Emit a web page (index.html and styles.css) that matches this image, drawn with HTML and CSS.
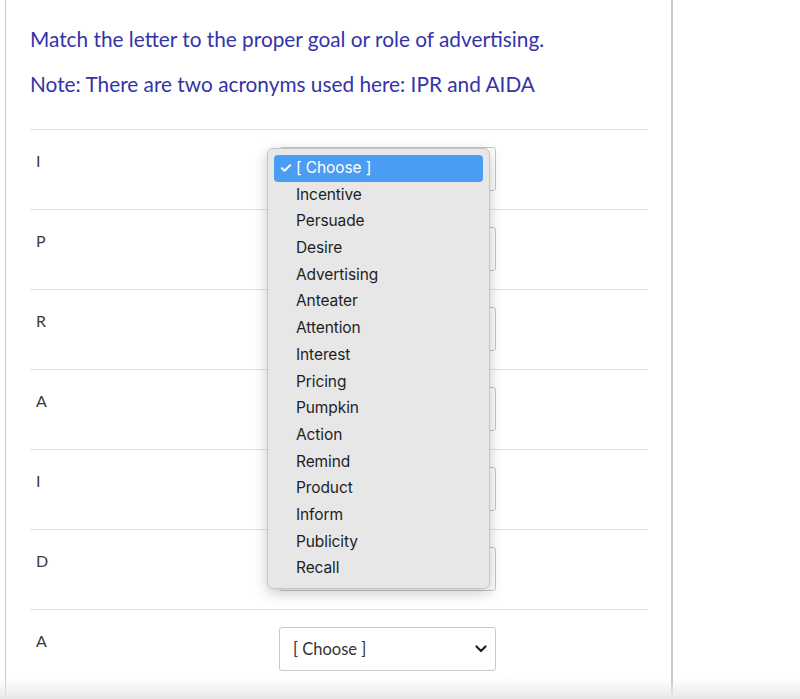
FILE: index.html
```html
<!DOCTYPE html>
<html>
<head>
<meta charset="utf-8">
<link rel="stylesheet" href="styles.css">
</head>
<body>
<div class="page">
  <div class="question">
    <p class="q-text">Match the letter to the proper goal or role of advertising.</p>
    <p class="q-text note">Note: There are two acronyms used here: IPR and AIDA</p>
  </div>
  <div class="rows">
    <div class="row"><div class="letter">I</div><div class="select"><span>[ Choose ]</span><svg class="chev" viewBox="0 0 12 8" width="12" height="8"><path d="M1.5 1.5 L6 6 L10.5 1.5" fill="none" stroke="#222" stroke-width="2.2" stroke-linecap="round" stroke-linejoin="round"/></svg></div></div>
    <div class="row"><div class="letter">P</div><div class="select"><span>[ Choose ]</span><svg class="chev" viewBox="0 0 12 8" width="12" height="8"><path d="M1.5 1.5 L6 6 L10.5 1.5" fill="none" stroke="#222" stroke-width="2.2" stroke-linecap="round" stroke-linejoin="round"/></svg></div></div>
    <div class="row"><div class="letter">R</div><div class="select"><span>[ Choose ]</span><svg class="chev" viewBox="0 0 12 8" width="12" height="8"><path d="M1.5 1.5 L6 6 L10.5 1.5" fill="none" stroke="#222" stroke-width="2.2" stroke-linecap="round" stroke-linejoin="round"/></svg></div></div>
    <div class="row"><div class="letter">A</div><div class="select"><span>[ Choose ]</span><svg class="chev" viewBox="0 0 12 8" width="12" height="8"><path d="M1.5 1.5 L6 6 L10.5 1.5" fill="none" stroke="#222" stroke-width="2.2" stroke-linecap="round" stroke-linejoin="round"/></svg></div></div>
    <div class="row"><div class="letter">I</div><div class="select"><span>[ Choose ]</span><svg class="chev" viewBox="0 0 12 8" width="12" height="8"><path d="M1.5 1.5 L6 6 L10.5 1.5" fill="none" stroke="#222" stroke-width="2.2" stroke-linecap="round" stroke-linejoin="round"/></svg></div></div>
    <div class="row"><div class="letter">D</div><div class="select"><span>[ Choose ]</span><svg class="chev" viewBox="0 0 12 8" width="12" height="8"><path d="M1.5 1.5 L6 6 L10.5 1.5" fill="none" stroke="#222" stroke-width="2.2" stroke-linecap="round" stroke-linejoin="round"/></svg></div></div>
    <div class="row"><div class="letter">A</div><div class="select"><span>[ Choose ]</span><svg class="chev" viewBox="0 0 12 8" width="12" height="8"><path d="M1.5 1.5 L6 6 L10.5 1.5" fill="none" stroke="#222" stroke-width="2.2" stroke-linecap="round" stroke-linejoin="round"/></svg></div></div>
  </div>
</div>

<ul class="menu">
  <li class="item selected"><span class="check">✓</span>[ Choose ]</li>
  <li class="item">Incentive</li>
  <li class="item">Persuade</li>
  <li class="item">Desire</li>
  <li class="item">Advertising</li>
  <li class="item">Anteater</li>
  <li class="item">Attention</li>
  <li class="item">Interest</li>
  <li class="item">Pricing</li>
  <li class="item">Pumpkin</li>
  <li class="item">Action</li>
  <li class="item">Remind</li>
  <li class="item">Product</li>
  <li class="item">Inform</li>
  <li class="item">Publicity</li>
  <li class="item">Recall</li>
</ul>

<div class="fade"></div>
</body>
</html>
```

FILE: styles.css
```css
html, body {
  margin: 0;
  padding: 0;
  background: #ffffff;
}
body {
  width: 800px;
  height: 699px;
  overflow: hidden;
  position: relative;
  font-family: Lato, "Liberation Sans", sans-serif;
}
.page {
  margin-left: 5px;
  width: 618px;
  height: 699px;
  border-left: 1px solid #c9c9c9;
  border-right: 2px solid #c9c9c9;
  padding: 0 23px 0 24px;
}
.question {
  padding-top: 27px;
  padding-bottom: 33px;
}
.q-text {
  margin: 0;
  font-size: 20.8px;
  line-height: 24px;
  color: #3434a8;
}
.note {
  margin-top: 21px;
}
.row {
  display: flex;
  height: 79px;
  border-top: 1px solid #e3e3e3;
}
.letter {
  width: 243px;
  padding-left: 6px;
  padding-top: 21px;
  font-size: 16px;
  line-height: 20px;
  color: #3a3a3a;
}
.select {
  margin-top: 17px;
  height: 42px;
  border: 1px solid #c8c8c8;
  border-radius: 3px;
  display: flex;
  align-items: center;
  justify-content: space-between;
  padding: 0 8px 0 13px;
  box-sizing: content-box;
  width: 194px;
  font-size: 16.5px;
  color: #333;
  background: #fff;
}
.menu {
  position: absolute;
  left: 267px;
  top: 148px;
  width: 209px;
  margin: 0;
  padding: 6px 6px;
  list-style: none;
  background: #e7e7e8;
  border: 1px solid #c6c6c6;
  border-radius: 6px;
  box-shadow: 0 4px 14px rgba(0, 0, 0, 0.22);
  font-family: Inter, "Noto Sans", sans-serif;
  font-size: 15.5px;
  color: #1e1e1e;
}
.item {
  height: 26.7px;
  line-height: 26.7px;
  padding-left: 22px;
  position: relative;
  letter-spacing: -0.1px;
}
.item.selected {
  background: #4b9cf3;
  color: #fff;
  border-radius: 4px;
}
.check {
  position: absolute;
  left: 5px;
  top: 0;
  font-size: 15px;
  font-weight: 600;
}
.fade {
  position: absolute;
  left: 0;
  right: 0;
  bottom: 0;
  height: 22px;
  background: linear-gradient(to bottom, rgba(235, 235, 235, 0), #e8e8e8);
}
```
